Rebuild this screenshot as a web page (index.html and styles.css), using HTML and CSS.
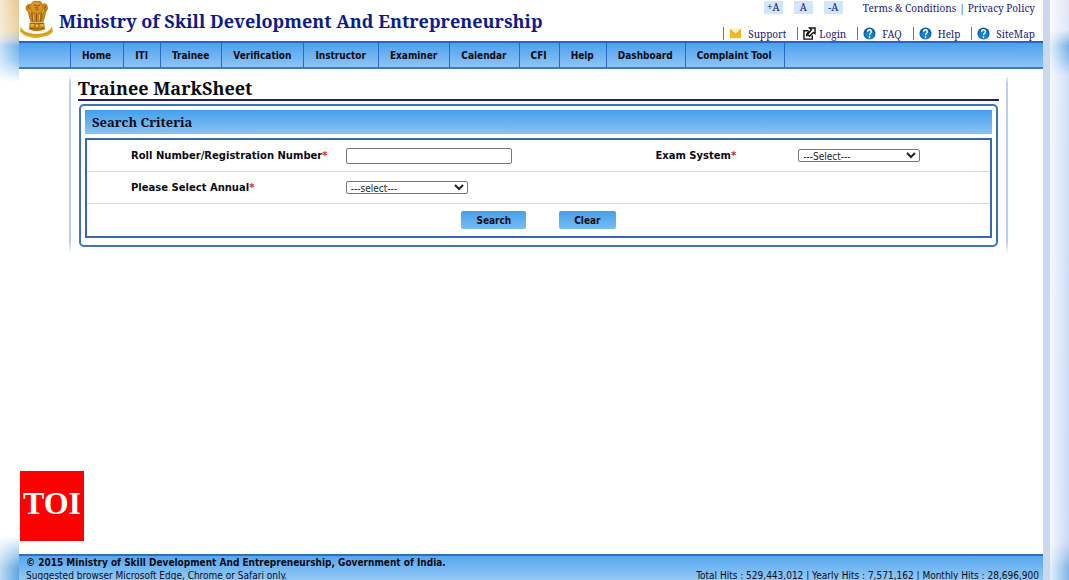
FILE: index.html
```html
<!DOCTYPE html>
<html lang="en">
<head>
<meta charset="utf-8">
<title>Trainee MarkSheet</title>
<link rel="stylesheet" href="styles.css">
</head>
<body>
<div class="edge edge-left"></div>
<div class="page">
  <header class="header">
    <div class="brand">
      <svg class="emblem" viewBox="0 0 34 40" role="img" aria-label="National emblem">
        <path d="M1 27Q3 33 10 34Q17 36 24 34Q31 32 33 27L34 33Q29 38 22 38Q16 40 10 38Q4 37 0 32Z" fill="#e3ad22"/>
        <path d="M2 32Q7 36 17 36T32 32" fill="none" stroke="#b9821a" stroke-width="1" stroke-dasharray="2 1"/>
        <path d="M10 24H25L26 30Q17 34 9 30Z" fill="#c98514"/>
        <path d="M7 5Q9 3 11 4Q13 0 18 1Q22 0 23 4Q26 2 28 5Q30 9 27 12Q26 17 24 23H11Q9 17 8 12Q4 9 7 5Z" fill="#c58219"/>
        <path d="M12 3Q17 0 22 4Q24 9 20 12Q17 14 14 12Q10 8 12 3Z" fill="#d8962a"/>
        <path d="M14 5Q17 7 21 5M15 8H19M16 10H19M8 6Q10 8 10 11M27 6Q25 8 25 11M12 13Q13 18 13 22M17 14V22M22 13Q22 18 21 22" fill="none" stroke="#8f560e" stroke-width="1"/>
        <path d="M14 15V21M20 15V21M9 9L11 13M25 9L23 13" fill="none" stroke="#f0bd4d" stroke-width="1"/>
        <path d="M10 24H25M10 29Q17 31 25 29" fill="none" stroke="#8b530a" stroke-width="1"/>
        <circle cx="17.500" cy="26.500" r="2" fill="#f0bd4d" stroke="#a8700c"/>
        <path d="M11 26H14M21 26H24" stroke="#f0bd4d" stroke-width="2"/>
      </svg>
      <h1 class="ministry">Ministry of Skill Development And Entrepreneurship</h1>
    </div>
    <div class="tools">
      <div class="tools-row">
        <div class="sizes">
          <button type="button" class="size">+A</button>
          <button type="button" class="size">A</button>
          <button type="button" class="size">-A</button>
        </div>
        <div class="legal"><a href="#">Terms &amp; Conditions</a><span>|</span><a href="#">Privacy Policy</a></div>
      </div>
      <div class="links">
        <a class="link" href="#"><svg class="icon" viewBox="0 0 14 14" aria-hidden="true"><path d="M1 2H13V12H1Z" fill="#f5b91d"/><path d="M1 2L7 8L13 2Z" fill="#fff0b8"/><path d="M1 3L7 8L13 3" fill="none" stroke="#e2a012"/></svg><span class="link-text">Support</span></a>
        <a class="link link-login" href="#"><svg class="icon" viewBox="0 0 14 14" aria-hidden="true"><path d="M6 4H1V13H10V9" fill="none" stroke="#111" stroke-width="1.500"/><path d="M4 10Q4 5 9 5" fill="none" stroke="#111" stroke-width="2"/><path d="M7 1H13V7L11 6L7 10L5 8L9 3Z" fill="#fff" stroke="#111" stroke-width="1.500"/></svg><span class="link-text">Login</span></a>
        <a class="link" href="#"><svg class="icon" viewBox="0 0 14 14" aria-hidden="true"><circle cx="7" cy="7" r="6.500" fill="#0d5fae"/><circle cx="7" cy="8" r="5" fill="#1681c8"/><path d="M5 5Q5 3 7 3T9 5Q9 6 8 7Q7 7 7 9M7 10V12" fill="none" stroke="#fff" stroke-width="1.500"/></svg><span class="link-text">FAQ</span></a>
        <a class="link" href="#"><svg class="icon" viewBox="0 0 14 14" aria-hidden="true"><circle cx="7" cy="7" r="6.500" fill="#0d5fae"/><circle cx="7" cy="8" r="5" fill="#1681c8"/><path d="M5 5Q5 3 7 3T9 5Q9 6 8 7Q7 7 7 9M7 10V12" fill="none" stroke="#fff" stroke-width="1.500"/></svg><span class="link-text">Help</span></a>
        <a class="link" href="#"><svg class="icon" viewBox="0 0 14 14" aria-hidden="true"><circle cx="7" cy="7" r="6.500" fill="#0d5fae"/><circle cx="7" cy="8" r="5" fill="#1681c8"/><path d="M5 5Q5 3 7 3T9 5Q9 6 8 7Q7 7 7 9M7 10V12" fill="none" stroke="#fff" stroke-width="1.500"/></svg><span class="link-text">SiteMap</span></a>
      </div>
    </div>
  </header>
  <nav class="nav">
    <a href="#">Home</a><a href="#">ITI</a><a href="#">Trainee</a><a href="#">Verification</a><a href="#">Instructor</a><a href="#">Examiner</a><a href="#">Calendar</a><a href="#">CFI</a><a href="#">Help</a><a href="#">Dashboard</a><a href="#">Complaint Tool</a>
  </nav>
  <main class="content">
    <h2 class="title">Trainee MarkSheet</h2>
    <section class="panel">
      <h3 class="panel-title">Search Criteria</h3>
      <form class="form">
        <div class="row">
          <label for="roll">Roll Number/Registration Number<span class="req">*</span></label>
          <div><input class="text" id="roll" type="text"></div>
          <label for="exam">Exam System<span class="req">*</span></label>
          <div><select class="select" id="exam"><option>---Select---</option></select></div>
        </div>
        <div class="row">
          <label for="annual">Please Select Annual<span class="req">*</span></label>
          <div><select class="select" id="annual"><option>---select---</option></select></div>
        </div>
        <div class="actions">
          <button type="button" class="btn">Search</button>
          <button type="reset" class="btn">Clear</button>
        </div>
      </form>
    </section>
  </main>
  <footer class="footer">
    <div><strong>© 2015 Ministry of Skill Development And Entrepreneurship, Government of India.</strong><br>Suggested browser Microsoft Edge, Chrome or Safari only.</div>
    <div class="hits">Total Hits : 529,443,012 | Yearly Hits : 7,571,162 | Monthly Hits : 28,696,900</div>
  </footer>
</div>
<div class="divider"></div>
<div class="edge edge-right"></div>
<div class="toi">TOI</div>
</body>
</html>
```
FILE: styles.css
```css
* { box-sizing: border-box; }
body {
  margin: 0;
  min-height: 100vh;
  display: flex;
  background: #fff;
  color: #0b0b14;
  font-family: "DejaVu Sans Condensed", "DejaVu Sans", sans-serif;
  font-size: 10px;
}
h1, h2, h3 { margin: 0; font-family: "Noto Serif", "Liberation Serif", serif; }
a { color: inherit; text-decoration: none; }
.edge { flex: 0 0 19px; }
.edge-left {
  background:
    linear-gradient(to right, rgba(255,255,255,.6), rgba(255,255,255,0)),
    linear-gradient(#e8c88e 0, #ecd2a0 30px, #b9c9cf 40px, #6fb2ea 46px, #8fc4f2 60px, #fff 82px, #fff calc(100% - 44px), #5ea6e2 calc(100% - 12px), #5ea6e2 100%);
}
.edge-right {
  background:
    linear-gradient(to right, rgba(255,255,255,.8), rgba(255,255,255,0)),
    linear-gradient(#e4e4f4 0, #dde8f8 30px, #74b2e8 46px, #86bdee 56px, #cfe0f8 76px, #cadaf6 calc(100% - 38px), #7fb6e8 calc(100% - 12px), #7fb6e8 100%);
}
.divider { flex: 0 0 7px; background: #cad8f2; }
.page { flex: 1; min-width: 0; display: flex; flex-direction: column; }

.header { display: flex; justify-content: space-between; min-height: 41px; }
.brand { display: flex; align-items: center; gap: 6px; padding-left: 1px; }
.emblem { width: 33px; height: 39px; margin-bottom: 2px; }
.ministry { font-size: 18px; line-height: 24px; color: #0c1c8c; white-space: nowrap; }
.tools {
  display: flex;
  flex-direction: column;
  justify-content: space-between;
  padding: 1px 8px 1px 0;
  font-family: "Noto Serif", "Liberation Serif", serif;
  color: #231a7c;
}
.tools-row { display: flex; justify-content: flex-end; gap: 20px; line-height: 15px; }
.sizes { display: flex; gap: 11px; }
.size {
  width: 19px;
  height: 13px;
  padding: 0;
  border: 0;
  background: #cfe6fb;
  color: inherit;
  font: inherit;
  line-height: 13px;
}
.legal { display: flex; gap: 3px; }
.links { display: flex; justify-content: flex-end; gap: 11px; line-height: 14px; }
.link { display: flex; align-items: center; gap: 6px; padding-left: 5px; border-left: 1px solid #6572b8; height: 13px; }
.link-login { gap: 3px; }
.icon { width: 13px; height: 13px; }

.nav {
  display: flex;
  height: 28px;
  padding-left: 51px;
  border-top: 2px solid #2565c6;
  border-bottom: 2px solid #3b78c8;
  background: linear-gradient(#4ba1ec, #8ec4f6);
}
.nav a {
  padding: 2px 12px 0 11px;
  border-right: 1px solid #2868c8;
  line-height: 22px;
  font-weight: bold;
}
.nav a:first-child { border-left: 1px solid #2868c8; }

.content {
  margin: 7px 35px 0 50px;
  padding: 1px 7px 6px;
  border: 2px solid;
  border-width: 0 2px;
  border-image: linear-gradient(#fff, #bccdf4 8px, #bccdf4 calc(100% - 12px), #fff) 1;
}
.title { border-bottom: 2px solid #211f80; font-size: 18px; line-height: 22px; }
.panel { margin: 3px 1px 0; padding: 4px 4px 7px; border: 2px solid #3d74bc; border-radius: 5px; }
.panel-title {
  padding: 0 7px;
  margin-bottom: 4px;
  background: linear-gradient(#43a0ec, #8cc3f3);
  font-size: 13px;
  line-height: 24px;
}
.form { border: 2px solid #3967b4; font-weight: bold; }
.row, .actions { min-height: 32px; display: flex; align-items: center; }
.row {
  display: grid;
  grid-template-columns: 215fr 310fr 143fr 192fr;
  padding-left: 44px;
  border-bottom: 1px solid #d3dae8;
  font-family: "DejaVu Sans", sans-serif;
}
.row > div { display: flex; }
.req { color: #e0202c; }
.text { width: 166px; height: 16px; border: 1px solid #777; border-radius: 2px; background: #fff; font: inherit; }
.select {
  width: 122px;
  height: 13px;
  padding: 0;
  border: 1px solid #777;
  border-radius: 2px;
  background: #fff;
  color: #222;
  font: 10px "DejaVu Sans Condensed", "DejaVu Sans", sans-serif;
}
.actions { justify-content: center; gap: 33px; }
.btn {
  height: 18px;
  padding: 0 15px;
  border: 0;
  border-radius: 2px;
  background: linear-gradient(#46a0ea, #79bcf4);
  color: inherit;
  font: inherit;
}
.footer {
  margin-top: auto;
  display: flex;
  justify-content: space-between;
  height: 26px;
  padding: 0 4px 0 7px;
  border-top: 2px solid #2f6fc0;
  background: linear-gradient(#55a7ee, #93c8f6);
  line-height: 13px;
  white-space: nowrap;
  overflow: hidden;
}
.hits { padding-top: 13px; }
.toi {
  position: fixed;
  left: 20px;
  bottom: 39px;
  width: 64px;
  height: 70px;
  background: #fe0000;
  color: #fff;
  text-align: center;
  font: bold 32px/64px "Liberation Serif", serif;
}
```
